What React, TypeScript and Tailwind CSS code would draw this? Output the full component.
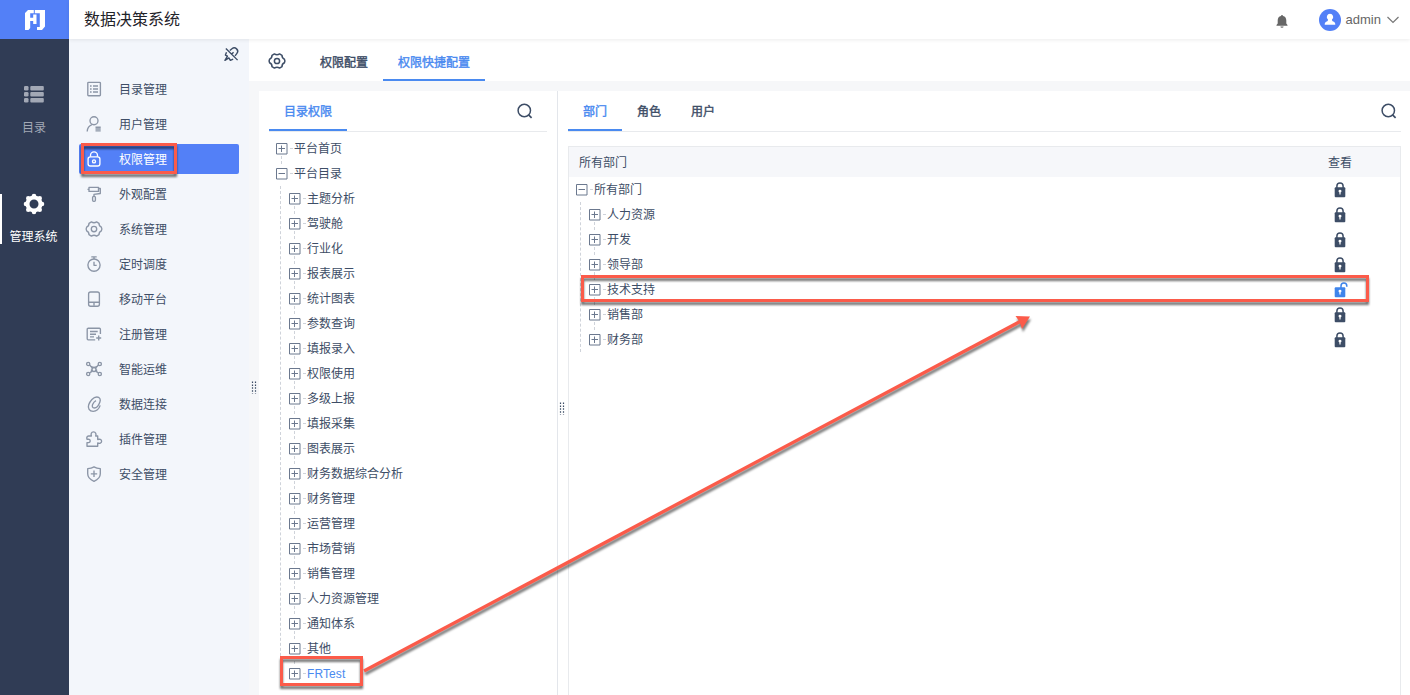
import type { ReactNode } from "react";
import clsx from "clsx";

const gearPath =
	"M5.400 .9 C7 2 9 2 10.600 .9 L13 2.300 C12.900 4.300 13.700 5.400 15.400 6.200 C16 7.300 16 8.700 15.400 9.800 C13.700 10.600 12.900 11.700 13 13.700 L10.600 15.100 C9 14 7 14 5.400 15.100 L3 13.700 C3.100 11.700 2.300 10.600 .6 9.800 C0 8.700 0 7.300 .6 6.200 C2.300 5.400 3.100 4.300 3 2.300 Z";

const menuItems: { label: string; icon: ReactNode }[] = [
	{
		label: "目录管理",
		icon: (
			<>
				<rect x="1.800" y="1.300" width="12.600" height="13.400" rx="0.800" />
				<path d="M4 5h1.600M4 8h1.600M4 11h1.600M7 5h5M7 8h5M7 11h5" />
			</>
		),
	},
	{
		label: "用户管理",
		icon: (
			<>
				<circle cx="8" cy="4.700" r="4" />
				<path d="M1.200 15.500c.2-3.300 1.800-5.700 4.800-6.800" />
				<path d="M9.500 11.200h5.200M9.500 13h5.200M9.500 14.800h5.200" />
			</>
		),
	},
	{
		label: "权限管理",
		icon: (
			<>
				<rect x="2.100" y="5.800" width="11.800" height="9.200" rx="2.200" />
				<path d="M4.500 5.800V4.400a3.500 3.500 0 0 1 7 0v1.400" />
				<circle cx="8" cy="10.400" r="1.500" />
			</>
		),
	},
	{
		label: "外观配置",
		icon: (
			<>
				<path d="M3 1.400h9.500v4H3zM3 3.400H1.500M12.500 2.500h1.800v5L8 8.300v2" />
				<rect x="6.600" y="10.300" width="2.800" height="5" rx="1.100" />
			</>
		),
	},
	{
		label: "系统管理",
		icon: (
			<>
				<path d={gearPath} />
				<circle cx="8" cy="8" r="2.700" />
			</>
		),
	},
	{
		label: "定时调度",
		icon: (
			<>
				<circle cx="8" cy="9.100" r="6.100" />
				<path d="M5.300 .9h5.400M8 1v2M8 5.800v3.500h2.700" />
			</>
		),
	},
	{
		label: "移动平台",
		icon: (
			<>
				<rect x="2.600" y="1" width="10.800" height="14.200" rx="2" />
				<path d="M2.600 11.200h10.800M8 11.400v3.400" />
			</>
		),
	},
	{
		label: "注册管理",
		icon: (
			<>
				<path d="M14.400 8V3.200a1 1 0 0 0-1-1H2.200a1 1 0 0 0-1 1v9.600a1 1 0 0 0 1 1h7" />
				<path d="M4 5.500h7.700M4 8.200h6M4 10.900h4M12.700 9.500v5M10.200 12h5" />
			</>
		),
	},
	{
		label: "智能运维",
		icon: (
			<>
				<circle cx="2.200" cy="3" r="1.600" />
				<circle cx="13.800" cy="3" r="1.600" />
				<circle cx="2.200" cy="13" r="1.600" />
				<circle cx="13.800" cy="13" r="1.600" />
				<circle cx="8" cy="8.500" r="2" />
				<path d="M3.600 4l2.800 3M12.400 4l-2.800 3M3.600 12l2.800-2.200M12.400 12L9.600 9.800M5.300 5.500L8 6.700l2.700-1.200M5.500 11.400v-3M10.500 11.400v-3" />
			</>
		),
	},
	{
		label: "数据连接",
		icon: (
			<path d="M14.200 9.400c-1 2.900-3.700 5.900-7 5.900-3.800 0-5.700-3-4.500-6.500C4 4.900 7.300 1 10.800 1c3 0 4.100 2.400 3.100 5-1 2.800-3.200 6-5.500 6-2 0-2.500-1.700-1.800-3.400.7-1.700 1.900-3.200 3.400-3.900" />
		),
	},
	{
		label: "插件管理",
		icon: (
			<path d="M2.600 5h2.800C4.700 3 5.200.8 7.500.8S10.400 3 9.700 5h2v3.500c2-.6 3.900-.1 3.900 1.800s-2 2.400-3.900 1.700v3.200H1v-3.600c1.900.3 3.200-.2 3.200-1.700S2.600 8.100 1 8.400C.4 6.700.9 5.200 2.600 5z" />
		),
	},
	{
		label: "安全管理",
		icon: (
			<>
				<path d="M8 .9c1.900 1.200 4 1.700 6.300 1.800v5.100c0 3.500-2.500 5.900-6.300 7.500-3.800-1.600-6.300-4-6.300-7.500V2.700C4 2.600 6.100 2.100 8 .9z" />
				<path d="M8 4.600v6.400M4.800 7.800h6.400" />
			</>
		),
	},
];

const catalog = [
	"主题分析",
	"驾驶舱",
	"行业化",
	"报表展示",
	"统计图表",
	"参数查询",
	"填报录入",
	"权限使用",
	"多级上报",
	"填报采集",
	"图表展示",
	"财务数据综合分析",
	"财务管理",
	"运营管理",
	"市场营销",
	"销售管理",
	"人力资源管理",
	"通知体系",
	"其他",
	"FRTest",
];

const departments = ["人力资源", "开发", "领导部", "技术支持", "销售部", "财务部"];

function Icon({ children, className }: { children: ReactNode; className?: string }) {
	return (
		<svg
			viewBox="0 0 16 16"
			className={clsx("size-4 shrink-0 overflow-visible", className)}
			fill="none"
			stroke="currentColor"
			strokeWidth="1.350"
			strokeLinejoin="round"
		>
			{children}
		</svg>
	);
}

function SearchIcon() {
	return (
		<Icon className="text-[#3d4d66]">
			<circle cx="7.300" cy="7.500" r="6.200" strokeWidth="1.500" />
			<path d="M11.600 11.800l3 3" strokeWidth="1.700" />
		</Icon>
	);
}

function LockIcon({ open = false }: { open?: boolean }) {
	return (
		<svg
			viewBox="0 0 14 16"
			className={clsx(
				"h-4 w-3.5 overflow-visible",
				open ? "text-[#3f85ec]" : "text-[#3d4d66]",
			)}
		>
			<path
				d={open ? "M8 6V4a2.900 2.900 0 0 1 5.800 0v.7" : "M3.900 6V4a3.100 3.100 0 0 1 6.200 0V6"}
				fill="none"
				stroke="currentColor"
				strokeWidth="1.500"
			/>
			<rect x="1.700" y="5.200" width="10.600" height="10" rx="1" fill="currentColor" />
			<path d="M7 7.700a1.400 1.400 0 0 1 .6 2.700v2.200H6.400v-2.200A1.400 1.400 0 0 1 7 7.700z" fill="#fff" />
		</svg>
	);
}

// +/- box with the dashed connectors around it
function TreeNode({
	label,
	expanded = false,
	up = false,
	down = false,
	active = false,
}: {
	label: string;
	expanded?: boolean;
	up?: boolean;
	down?: boolean;
	active?: boolean;
}) {
	return (
		<div className="flex h-[25px] items-center">
			<svg width="18" height="25" fill="none" className="shrink-0">
				<g stroke="#cfd3da" strokeDasharray="3 3">
					{up && <path d="M5.500 0v6" />}
					{down && <path d="M5.500 20v5" />}
					<path d="M14 12.500h3" />
				</g>
				<path d="M.5 7.500h10.500v10.500H.5zM2.500 12.500h6.500" stroke="#6b788e" />
				{!expanded && <path d="M5.500 9.500v6.500" stroke="#6b788e" />}
			</svg>
			<span className={clsx("pt-px", active ? "tracking-[0.1px] text-[#4a8af0]" : "text-[#3d4d66]")}>
				{label}
			</span>
		</div>
	);
}

function Grip() {
	return (
		<svg width="6" height="13" className="text-[#3d4d66]">
			<path
				d="M1.500 .5v12M4.500 .5v12"
				stroke="currentColor"
				strokeWidth="1.200"
				strokeDasharray="1.500 1.400"
			/>
		</svg>
	);
}

function Rail() {
	return (
		<div className="flex w-[69px] shrink-0 flex-col bg-[#303c55] text-xs">
			<div className="flex h-[39px] items-center justify-center bg-[#5380f7]">
				<svg width="20" height="20" viewBox="0 0 20 20" fill="#fff" className="overflow-visible">
					<path d="M3 0h5.800v3.200H5.200v4.600h3V4.500h3.300V14H8.200v-3H5.200v7L3.500 20H0V3z" />
					<path d="M9.800 0H20v16.500L17 20h-5v-3h2.800V3.200h-5z" />
				</svg>
			</div>
			<div className="flex h-[110px] flex-col items-center pt-[47px] pr-px text-[#a2a8b5]">
				<svg width="20" height="17" fill="currentColor">
					<rect width="4.500" height="4.500" rx="1.300" />
					<rect y="6" width="4.500" height="4.500" rx="1.300" />
					<rect y="12" width="4.500" height="4.500" rx="1.300" />
					<rect x="6.300" width="13.500" height="4.500" rx="1" />
					<rect x="6.300" y="6" width="13.500" height="4.500" rx="1" />
					<rect x="6.300" y="12" width="13.500" height="4.500" rx="1" />
				</svg>
				<span className="mt-[17px] leading-4">目录</span>
			</div>
			<div className="mt-[45px] flex h-[50px] flex-col items-center border-l-2 border-white pr-1 text-white">
				<svg width="22" height="22" viewBox="-11 -10 22 22" className="overflow-visible">
					<circle r="6.500" fill="none" stroke="#fff" strokeWidth="4" />
					<g stroke="#fff" strokeWidth="4.600" strokeLinecap="round">
						<path d="M0-8v0M0 8v0M-8 0h0M8 0h0M5.700-5.700h0M-5.700-5.700h0M5.700 5.700h0M-5.700 5.700h0" />
					</g>
				</svg>
				<span className="mt-[13px] leading-4 whitespace-nowrap">管理系统</span>
			</div>
		</div>
	);
}

function Sidebar() {
	return (
		<div className="flex w-[180px] shrink-0 flex-col bg-[#f3f6fb] px-2.5 text-xs">
			<div className="flex h-[35px] justify-end pt-2">
				<Icon className="size-[15px] text-[#3d4d66]">
					<path
						d="M2 1.500l12.500 12.500M6.200 3.800l2.300-2c1.600-1.200 3.600-1 4.900.2s1.600 3.300.4 4.800l-2 2.600M2.700 5.600l-1.200 3 2.200 1.200L1 14.200l4.200-2.600 1.600 2.600 3-1.300M10.200 5.600L8.300 7.500"
						strokeWidth="1.500"
					/>
				</Icon>
			</div>
			<div className="flex flex-col gap-[5px]">
				{menuItems.map(({ label, icon }) => {
					const selected = label === "权限管理";
					return (
						<div
							key={label}
							className={clsx(
								"flex h-[30px] items-center gap-[17px] rounded-xs pl-[7px]",
								selected ? "bg-[#5380f7] text-white" : "text-[#3d4d66]",
							)}
						>
							<Icon className={selected ? "text-white" : "text-[#8b95a6]"}>{icon}</Icon>
							<span className="pt-px">{label}</span>
						</div>
					);
				})}
			</div>
		</div>
	);
}

function CatalogPanel() {
	return (
		<div className="flex w-[299px] shrink-0 flex-col border-r border-[#e3e6eb] bg-white px-2.5">
			<div className="flex h-[41px] shrink-0 items-stretch justify-between border-b border-[#e8eaed]">
				<div className="flex w-[78px] items-center justify-center border-b-2 border-[#4a8af0] pt-1 text-[#4a8af0] [-webkit-text-stroke:0.4px]">
					目录权限
				</div>
				<div className="flex items-center pr-3.5">
					<SearchIcon />
				</div>
			</div>
			<div className="flex flex-col pt-1 pl-[7px]">
				<TreeNode label="平台首页" down />
				<TreeNode label="平台目录" up expanded />
				<div className="ml-1 border-l border-dashed border-[#cfd3da] pl-2">
					{catalog.map((name, i) => (
						<TreeNode
							key={name}
							label={name}
							up={i > 0}
							down={i < catalog.length - 1}
							active={name === "FRTest"}
						/>
					))}
				</div>
			</div>
		</div>
	);
}

function DepartmentPanel() {
	return (
		<div className="flex min-w-0 grow flex-col bg-white pr-[9px] pl-2.5">
			<div className="flex h-[41px] shrink-0 items-stretch border-b border-[#e8eaed] [-webkit-text-stroke:0.4px]">
				<div className="flex w-[54px] items-center justify-center border-b-2 border-[#4a8af0] pt-1 text-[#4a8af0]">
					部门
				</div>
				<div className="flex w-[54px] items-center justify-center pt-0.5">角色</div>
				<div className="flex w-[54px] items-center justify-center pt-0.5">用户</div>
				<div className="ml-auto flex items-center pr-1">
					<SearchIcon />
				</div>
			</div>
			<div className="mt-3.5 flex grow flex-col border-x border-t border-[#e8eaed]">
				<div className="flex h-[30px] items-center justify-between bg-[#f6f7fa] pt-0.5 pr-12 pl-2.5">
					<span>所有部门</span>
					<span>查看</span>
				</div>
				<div className="flex justify-between pr-[53px] pl-[7px]">
					<div>
						<TreeNode label="所有部门" expanded />
						<div className="ml-1 border-l border-dashed border-[#cfd3da] pl-2">
							{departments.map((name, i) => (
								<TreeNode
									key={name}
									label={name}
									up={i > 0}
									down={i < departments.length - 1}
								/>
							))}
						</div>
					</div>
					<div>
						{["所有部门", ...departments].map((name) => (
							<div key={name} className="flex h-[25px] items-center">
								<LockIcon open={name === "技术支持"} />
							</div>
						))}
					</div>
				</div>
			</div>
		</div>
	);
}

function Annotations() {
	const frame = "absolute border-3 border-[#fb5b4a] drop-shadow-[0_3px_1px_rgba(0,0,0,0.55)]";
	return (
		<div className="pointer-events-none absolute inset-0">
			<div className={clsx(frame, "top-[143px] left-[81px] h-[31px] w-24")} />
			<div className={clsx(frame, "top-[656px] left-[280px] h-[30px] w-[83px]")} />
			<div className={clsx(frame, "top-[275px] left-[581px] h-[27px] w-[788px]")} />
			<svg
				width="1410"
				height="695"
				className="absolute inset-0 drop-shadow-[1px_3px_1px_rgba(0,0,0,0.5)]"
			>
				<path d="M364 671L1021 321" stroke="#fb5b4a" strokeWidth="3.400" />
				<path d="M1030 316.500L1015.500 316l4 5.500 2.500 7.500z" fill="#fb5b4a" />
			</svg>
		</div>
	);
}

export default function App() {
	return (
		<div className="relative flex h-[695px] w-[1410px] overflow-hidden bg-[#f6f7f9] font-['Liberation_Sans','Noto_Sans_CJK_SC',sans-serif] text-xs text-[#3d4d66]">
			<Rail />
			<div className="flex min-w-0 grow flex-col">
				<div className="z-10 flex h-[39px] shrink-0 items-center bg-white pr-[11px] pl-[15px] shadow-[0_1px_4px_rgba(0,0,0,0.08)]">
					<span className="pt-px text-base text-[#1f2329]">数据决策系统</span>
					<svg width="12" height="13" className="mt-[3px] ml-auto text-[#666]" fill="currentColor">
						<path d="M6 0a1 1 0 0 1 1 1c2.300.500 3.300 2.300 3.300 4.500v3l1.200 1.500v.7H.5V10l1.200-1.500v-3C1.700 3.300 2.700 1.500 5 1a1 1 0 0 1 1-1zM4.400 11.400h3.200a1.600 1.300 0 0 1-3.200 0z" />
					</svg>
					<svg width="22" height="22" viewBox="0 0 22 22" className="ml-[31px]">
						<circle cx="11" cy="11" r="11" fill="#5380f7" />
						<path
							d="M11 4.800a3.200 3.200 0 0 1 2 5.700c0 1.300.3 1.600 1.300 2 1.500.6 2 1.400 2 3.300H5.700c0-1.900.5-2.700 2-3.300 1-.4 1.300-.7 1.300-2a3.200 3.200 0 0 1 2-5.700z"
							fill="#fff"
						/>
					</svg>
					<span className="ml-[5px] pt-px text-[13px] text-[#666]">admin</span>
					<svg width="12" height="8" className="ml-[6px] overflow-visible" fill="none" stroke="#777">
						<path d="M.5 1l5.500 5.500L11.500 1" strokeWidth="1.200" />
					</svg>
				</div>
				<div className="flex min-h-0 grow">
					<Sidebar />
					<div className="flex min-w-0 grow flex-col">
						<div className="flex h-[42px] shrink-0 items-stretch bg-white pl-5 [-webkit-text-stroke:0.4px]">
							<div className="flex items-center pt-0.5">
								<Icon>
									<path d={gearPath} strokeWidth="1.500" />
									<circle cx="8" cy="8" r="2.600" strokeWidth="1.500" />
								</Icon>
							</div>
							<div className="ml-5 flex w-[78px] items-center justify-center pt-1.5">权限配置</div>
							<div className="flex w-[102px] items-center justify-center border-b-2 border-[#4a8af0] pt-2 text-[#4a8af0]">
								权限快捷配置
							</div>
						</div>
						<div className="flex min-h-0 grow pt-2.5">
							<div className="flex w-2.5 shrink-0 items-center justify-center pb-3">
								<Grip />
							</div>
							<CatalogPanel />
							<DepartmentPanel />
						</div>
					</div>
				</div>
			</div>
			<div className="absolute top-[402px] left-[559px]">
				<Grip />
			</div>
			<Annotations />
		</div>
	);
}
